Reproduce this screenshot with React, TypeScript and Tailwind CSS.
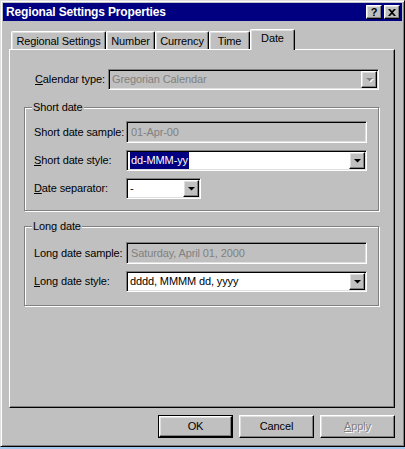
import type { ReactNode } from 'react';

const raised =
  'border border-t-white border-l-white border-r-black border-b-black shadow-[inset_-1px_-1px_#808080,inset_1px_1px_#dfdfdf]';
const sunken =
  'border border-t-[#808080] border-l-[#808080] border-r-white border-b-white shadow-[inset_1px_1px_#000,inset_-1px_-1px_#dfdfdf]';

function Arrow({ disabled }: { disabled?: boolean }) {
  return (
    <svg width="7" height="5" viewBox="0 0 7 5" className="overflow-visible">
      {disabled && <path d="M1 1h7L4.5 4.5z" fill="#fff" />}
      <path d="M0 0h7L3.5 3.5z" fill={disabled ? '#808080' : '#000'} />
    </svg>
  );
}

function Combo({ w, children, disabled }: { w: string; children: ReactNode; disabled?: boolean }) {
  return (
    <div className={`${sunken} ${w} h-[21px] flex p-px ${disabled ? 'bg-[#c0c0c0]' : 'bg-white'}`}>
      <div className={`flex-1 flex items-center pl-[2px] overflow-hidden whitespace-nowrap ${disabled ? 'text-[#808080]' : 'text-black'}`}>
        {children}
      </div>
      <div className={`${raised} w-[16px] h-[17px] bg-[#c0c0c0] flex items-center justify-center pt-px`}>
        <Arrow disabled={disabled} />
      </div>
    </div>
  );
}

function Field({ w, children }: { w: string; children: ReactNode }) {
  return (
    <div className={`${sunken} ${w} h-[22px] bg-[#c0c0c0] flex items-center pl-[4px] text-[#808080] whitespace-nowrap`}>
      {children}
    </div>
  );
}

function Group({ title, children, className }: { title: string; children: ReactNode; className: string }) {
  return (
    <div className={`relative ml-[14px] w-[355px] border border-[#808080] shadow-[1px_1px_0_#fff,inset_1px_1px_0_#fff] ${className}`}>
      <span className="absolute -top-[8px] left-[7px] px-px bg-[#c0c0c0] leading-[14px]">{title}</span>
      {children}
    </div>
  );
}

function Row({ label, children, className = '' }: { label: ReactNode; children: ReactNode; className?: string }) {
  return (
    <div className={`flex items-center ${className}`}>
      <div className="w-[92px] whitespace-nowrap">{label}</div>
      {children}
    </div>
  );
}

function Tab({ w, children, selected }: { w: string; children: ReactNode; selected?: boolean }) {
  return (
    <div
      className={`${w} flex items-center justify-center bg-[#c0c0c0] border-t border-l border-r border-t-white border-l-white border-r-black rounded-tl-[2px] rounded-tr-[2px] shadow-[inset_-1px_0_#808080,inset_1px_1px_#dfdfdf] ${
        selected ? 'h-[21px] mb-[-1px] relative z-10 pb-[3px]' : 'h-[18px] pt-px'
      }`}
    >
      {children}
    </div>
  );
}

function Button({ children, isDefault, disabled }: { children: ReactNode; isDefault?: boolean; disabled?: boolean }) {
  const inner = (
    <div className={`${raised} h-full w-full flex items-center justify-center bg-[#c0c0c0]`}>
      <span className={disabled ? 'text-[#808080] [text-shadow:1px_1px_0_#fff]' : ''}>{children}</span>
    </div>
  );
  return isDefault ? (
    <div className="w-[75px] h-[23px] border border-black">{inner}</div>
  ) : (
    <div className="w-[75px] h-[23px]">{inner}</div>
  );
}

function TitleButton({ children }: { children: ReactNode }) {
  return (
    <div className={`${raised} w-[16px] h-[14px] bg-[#c0c0c0] flex items-center justify-center`}>{children}</div>
  );
}

export default function App() {
  return (
    <div className="w-[405px] h-[449px] bg-[#a4c8ec] font-['Liberation_Sans',Arial,sans-serif] text-[11px] tracking-[-0.12px] text-black select-none">
      <div className="w-[405px] h-[447px] bg-[#c0c0c0] border border-t-[#dfdfdf] border-l-[#dfdfdf] border-r-black border-b-black shadow-[inset_1px_1px_#fff,inset_-1px_-1px_#808080] p-[2px] flex flex-col">
        {/* title bar */}
        <div className="h-[18px] bg-[#000080] flex items-center pl-[3px] pr-[2px]">
          <span className="text-white font-bold text-[12px] tracking-[-0.15px] flex-1">Regional Settings Properties</span>
          <div className="flex">
            <TitleButton>
              <span className="font-bold text-[11px] leading-none tracking-normal">?</span>
            </TitleButton>
            <div className="ml-[2px]">
              <TitleButton>
                <svg width="8" height="7" viewBox="0 0 8 7">
                  <path d="M0 0h2l2 2 2-2h2L5 3.5 8 7H6L4 5 2 7H0l3-3.5z" fill="#000" />
                </svg>
              </TitleButton>
            </div>
          </div>
        </div>

        <div className="pl-[6px] pr-[7px] pt-[8px] flex flex-col">
          {/* tabs */}
          <div className="flex items-end h-[20px] pl-[2px]">
            <Tab w="w-[95px]">Regional Settings</Tab>
            <Tab w="w-[49px]">Number</Tab>
            <Tab w="w-[54px]">Currency</Tab>
            <Tab w="w-[41px]">Time</Tab>
            <Tab w="w-[45px]" selected>
              Date
            </Tab>
          </div>

          {/* tab panel */}
          <div className="h-[359px] border border-t-white border-l-white border-r-black border-b-black shadow-[inset_-1px_-1px_#808080] pt-[19px] flex flex-col">
            <div className="flex items-center pl-[25px]">
              <div className="w-[73px]">
                <span className="underline">C</span>alendar type:
              </div>
              <Combo w="w-[271px]" disabled>
                Gregorian Calendar
              </Combo>
            </div>

            <Group title="Short date" className="mt-[17px] pt-[13px] pb-[11px] pl-[9px] flex flex-col">
              <Row label="Short date sample:">
                <Field w="w-[241px]">01-Apr-00</Field>
              </Row>
              <Row label={<><span className="underline">S</span>hort date style:</>} className="mt-[7px]">
                <Combo w="w-[241px]">
                  <span className="bg-[#000080] text-white px-px">dd-MMM-yy</span>
                </Combo>
              </Row>
              <Row label={<><span className="underline">D</span>ate separator:</>} className="mt-[7px]">
                <Combo w="w-[75px]">-</Combo>
              </Row>
            </Group>

            <Group title="Long date" className="mt-[15px] pt-[15px] pb-[13px] pl-[9px] flex flex-col">
              <Row label="Long date sample:">
                <Field w="w-[241px]">Saturday, April 01, 2000</Field>
              </Row>
              <Row label={<><span className="underline">L</span>ong date style:</>} className="mt-[7px]">
                <Combo w="w-[241px]">dddd, MMMM dd, yyyy</Combo>
              </Row>
            </Group>
          </div>

          {/* buttons */}
          <div className="flex justify-end gap-[6px] mt-[7px]">
            <Button isDefault>OK</Button>
            <Button>Cancel</Button>
            <Button disabled>
              <span className="underline">A</span>pply
            </Button>
          </div>
        </div>
      </div>
    </div>
  );
}
